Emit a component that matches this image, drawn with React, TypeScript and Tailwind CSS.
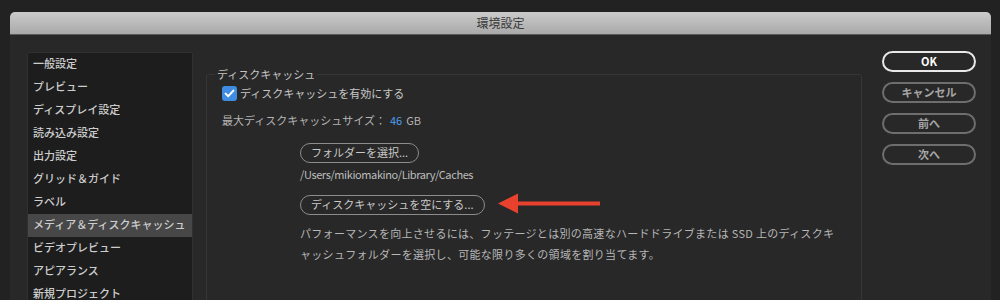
const sidebarItems = [
  "一般設定",
  "プレビュー",
  "ディスプレイ設定",
  "読み込み設定",
  "出力設定",
  "グリッド＆ガイド",
  "ラベル",
  "メディア＆ディスクキャッシュ",
  "ビデオプレビュー",
  "アピアランス",
  "新規プロジェクト",
];

const sideButtons = ["キャンセル", "前へ", "次へ"];

function CheckIcon() {
  return (
    <svg viewBox="0 0 15 15" className="h-[15px] w-[15px]">
      <rect x="0" y="0" width="15" height="15" rx="3" fill="#3f8de3" />
      <path d="M3.6 7.6 L6.3 10.2 L11.4 4.6" fill="none" stroke="#fff" strokeWidth="2" strokeLinecap="round" strokeLinejoin="round" />
    </svg>
  );
}

export default function App() {
  return (
    <div className="relative h-[300px] w-[1000px] overflow-hidden bg-[#222222] pt-[12px] font-['Noto_Sans_CJK_JP','Noto_Sans',sans-serif]">
      <div className="ml-[10px] h-[300px] w-[981px] rounded-t-[5px] bg-[#282828]">
        <div className="flex h-[23px] items-center justify-center rounded-t-[5px] border-b border-[#5a5a5a] bg-gradient-to-b from-[#cbcbcb] to-[#a9a9a9] text-[12px] text-[#3a3a3a]">
          環境設定
        </div>

        <div className="flex">
          <ul className="ml-[17px] mt-[17px] h-[260px] w-[166px] rounded-[2px] border border-[#303030] bg-[#1d1d1d]">
            {sidebarItems.map((item, i) => (
              <li
                key={item}
                className={`flex h-[23px] items-center whitespace-nowrap pb-[3px] pl-[5px] text-[11px] font-medium text-[#cdcdcd] ${i === 7 ? "bg-[#474747]" : ""}`}
              >
                {item}
              </li>
            ))}
          </ul>

          <fieldset className="ml-[13px] mt-[31px] h-[240px] w-[656px] rounded-[3px] border border-[#363636] pl-[15px]">
            <legend className="ml-[-7px] px-[2px] text-[11px] leading-[16px] text-[#c4c4c4]">ディスクキャッシュ</legend>

            <div className="mt-[3px] flex items-center gap-[3px] text-[11px] text-[#c6c6c6]">
              <CheckIcon />
              <span>ディスクキャッシュを有効にする</span>
            </div>

            <p className="mt-[10px] text-[11px] leading-[16px] text-[#b4b4b4]">
              最大ディスクキャッシュサイズ：
              <span className="ml-[4px] text-[#4f9fef]">46</span>
              <span className="ml-[4px]">GB</span>
            </p>

            <div className="ml-[78px] mt-[15px]">
              <button
                type="button"
                className="flex h-[20px] items-center rounded-full border-[1.5px] border-[#8c8c8c] px-[10px] text-[11px] text-[#c8c8c8]"
              >
                フォルダーを選択...
              </button>
              <p className="mt-[3px] text-[11px] leading-[16px] tracking-[-0.4px] text-[#bdbdbd]">
                /Users/mikiomakino/Library/Caches
              </p>

              <button
                type="button"
                className="mt-[13px] flex h-[20px] items-center rounded-full border-[1.5px] border-[#8c8c8c] px-[10px] text-[11px] text-[#c8c8c8]"
              >
                ディスクキャッシュを空にする...
              </button>

              <p className="mt-[8px] w-[542px] text-[11px] leading-[21px] tracking-[0.3px] text-[#b6b6b6]">
                パフォーマンスを向上させるには、フッテージとは別の高速なハードドライブまたは SSD 上のディスクキャッシュフォルダーを選択し、可能な限り多くの領域を割り当てます。
              </p>
            </div>
          </fieldset>

          <div className="ml-[20px] mt-[16px] flex w-[94px] flex-col gap-[10px]">
            <button
              type="button"
              className="flex h-[21px] items-center justify-center rounded-full border-2 border-[#e8e8e8] text-[11px] font-bold text-white"
            >
              OK
            </button>
            {sideButtons.map((label) => (
              <button
                key={label}
                type="button"
                className="flex h-[21px] items-center justify-center rounded-full border-2 border-[#6e6e6e] text-[11px] font-bold text-[#a6a6a6]"
              >
                {label}
              </button>
            ))}
          </div>
        </div>
      </div>

      <svg className="absolute left-[498px] top-[193px]" width="104" height="21" viewBox="0 0 104 21">
        <polygon points="0,10.5 20,0.5 20,20.5" fill="#e8412d" />
        <rect x="18" y="8.5" width="84" height="4" fill="#e8412d" />
      </svg>
    </div>
  );
}
